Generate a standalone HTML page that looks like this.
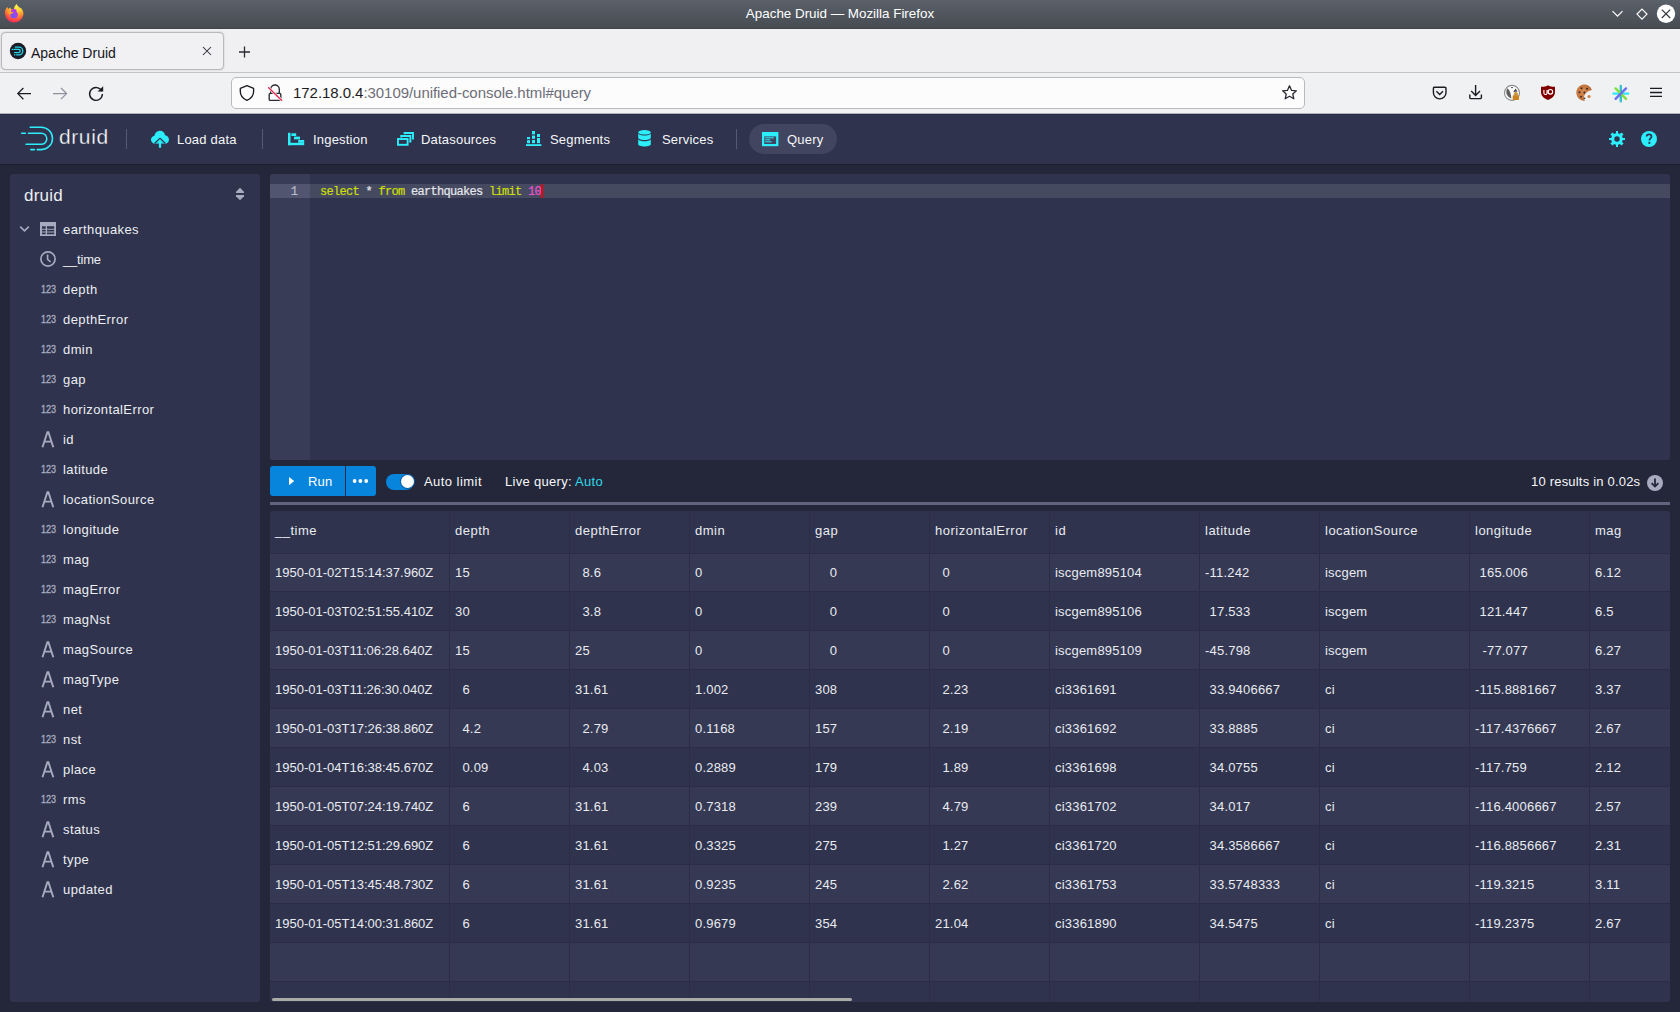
<!DOCTYPE html>
<html><head><meta charset="utf-8"><title>Apache Druid</title>
<style>
*{box-sizing:border-box;margin:0;padding:0}
html,body{width:1680px;height:1012px;overflow:hidden;font-family:"Liberation Sans",sans-serif;background:#24273a;position:relative}
.a{position:absolute}
.t{position:absolute;white-space:pre;line-height:20px}
svg{position:absolute;overflow:visible}
#title{left:0;top:0;width:1680px;height:29px;background:linear-gradient(#5b6169,#474c53);border-bottom:1px solid #3f434a}
#tabs{left:0;top:29px;width:1680px;height:44px;background:#f0f0f3;border-bottom:1px solid #c4c4c8}
#tab{left:1.5px;top:3.7px;width:221.5px;height:36.5px;background:#f1f1f4;border-radius:4px;box-shadow:0 0 1.5px 0.5px rgba(0,0,0,.28)}
#toolbar{left:0;top:73px;width:1680px;height:40px;background:#f0f1f3}
#url{left:231px;top:4px;width:1074px;height:32px;background:#fcfcfd;border:1px solid #b9b9be;border-radius:5px}
#nav{left:0;top:113px;width:1680px;height:51px;background:#2f334d;box-shadow:0 1px 1px rgba(0,0,0,.2)}
.nt{color:#f6f7f9;font-size:13px;letter-spacing:.2px;top:16.5px}
.sep{position:absolute;width:1px;height:20px;top:16px;background:#555a73}
#side{left:10px;top:174px;width:250px;height:828px;background:#2f334d;border-radius:3px}
.st{color:#eceef2;font-size:13px;letter-spacing:.4px;left:53px}
.ic{fill:#a7abc0}
#editor{left:270px;top:174px;width:1400px;height:286px;background:#2f334d;border-radius:3px;overflow:hidden}
#gutter{left:0;top:0;width:40px;height:286px;background:#383c56}
#hl{left:40px;top:10px;width:1360px;height:14px;background:#454a61}
#ghl{left:0;top:10px;width:40px;height:14px;background:#51556f}
.code{font-family:"Liberation Mono",monospace;font-size:12px;letter-spacing:-.7px;line-height:14px;top:11px;white-space:pre;-webkit-text-stroke:.2px currentColor}
.rt{color:#f6f7f9;font-size:13px;letter-spacing:.15px}
#bar{left:270px;top:502px;width:1400px;height:3px;background:#60647f}
#table{left:270px;top:511px;width:1400px;height:491px;background:#2f334d;border-radius:3px;overflow:hidden}
.row{position:absolute;left:0;width:1400px;height:39px;border-bottom:1px solid #2a2d43}
.row.odd{background:#353954}
.vl{position:absolute;top:0;width:1px;height:491px;background:#2a2d43}
.c{position:absolute;top:0;height:38px;line-height:38px;font-size:13px;color:#e9ebf0;white-space:pre;letter-spacing:.2px}
.h{position:absolute;top:0;height:40px;line-height:40px;font-size:13px;color:#e9ebf0;white-space:pre;letter-spacing:.5px}
</style></head><body>

<div id="title" class="a">
 <svg width="28" height="28" style="left:0;top:0" viewBox="0 0 28 28">
  <defs>
   <radialGradient id="ffg" cx="16.8" cy="4.5" r="21" gradientUnits="userSpaceOnUse">
    <stop offset="0" stop-color="#fff44f"/><stop offset="0.3" stop-color="#ffd53a"/><stop offset="0.5" stop-color="#ff9a2e"/><stop offset="0.75" stop-color="#ff4646"/><stop offset="1" stop-color="#e3127d"/>
   </radialGradient>
   <radialGradient id="ffp" cx="13" cy="16" r="5.5" gradientUnits="userSpaceOnUse">
    <stop offset="0" stop-color="#6a5ae8"/><stop offset="0.6" stop-color="#9c46f0"/><stop offset="1" stop-color="#b833e1"/>
   </radialGradient>
  </defs>
  <path d="M14 8.8 C14.3 6.6 15.4 5 16.6 3.9 C17.4 5.6 19 7.1 21.2 8.3 C22.7 10 23.5 12 23.5 14.2 A9.4 9.4 0 1 1 5.1 10.6 C5.6 9.2 6.4 8 7.4 7.1 L8.2 8.9 L10.3 7.6 L11 9.4 Z" fill="url(#ffg)"/>
  <path d="M11.6 9.6 C13.4 8.6 15.6 9 16.8 10.4 L16 11.2 C17.3 12 17.9 13.4 17.8 14.8 A3.8 3.8 0 1 1 10.2 14.6 Z" fill="url(#ffp)"/>
  <path d="M6.6 12.4 C8.6 11.6 11.2 11.4 13.8 12.4 C12.4 13 11.2 13.6 10.4 14.6 C9.6 13.6 8 12.8 6.6 12.4 Z" fill="#ffa62a"/>
 </svg>
 <div class="t" style="left:0;width:1680px;top:4px;text-align:center;color:#fff;font-size:13.4px">Apache Druid — Mozilla Firefox</div>
 <svg width="14" height="10" style="left:1611px;top:9px"><polyline points="1.5,2.2 6.5,7.2 11.5,2.2" fill="none" stroke="#fff" stroke-width="1.2"/></svg>
 <svg width="14" height="14" style="left:1635px;top:7px"><polygon points="7,2.1 12,7.1 7,12.1 2,7.1" fill="none" stroke="#fff" stroke-width="1.15"/></svg>
 <svg width="20" height="20" style="left:1656px;top:4px"><circle cx="10" cy="9.8" r="9.2" fill="#fff"/><path d="M5.8 5.6 L14.2 14 M14.2 5.6 L5.8 14" stroke="#2d3035" stroke-width="1.1"/></svg>
</div>
<div id="tabs" class="a">
 <div id="tab" class="a"></div>
 <svg width="18" height="18" style="left:9px;top:13px" viewBox="0 0 18 18">
  <circle cx="9" cy="9" r="8.2" fill="#1a1c27"/>
  <g fill="none" stroke="#2ad4e6" stroke-width="1.3" stroke-linecap="round">
   <path d="M6.3 5.2 H10 A3.8 3.8 0 0 1 10 12.8 H7.6"/>
   <path d="M5 7.4 H9.6 A1.6 1.6 0 0 1 9.6 10.6 H5.6"/>
   <path d="M3.2 7.4 H3.6 M5.4 12.8 H6"/>
  </g>
 </svg>
 <div class="t" style="left:31px;top:14px;font-size:14px;color:#15141a">Apache Druid</div>
 <svg width="12" height="12" style="left:201px;top:16px"><path d="M2 2 L10 10 M10 2 L2 10" stroke="#2b2a33" stroke-width="1.05"/></svg>
 <svg width="14" height="14" style="left:237px;top:16px"><path d="M7.5 1.5 V12.5 M2 7 H13" stroke="#2b2a33" stroke-width="1.3"/></svg>
</div>
<div id="toolbar" class="a">
 <svg width="18" height="16" style="left:16px;top:13px"><path d="M1.8 7.6 H15 M7.4 2 L1.8 7.6 L7.4 13.2" fill="none" stroke="#1c1b22" stroke-width="1.25"/></svg>
 <svg width="18" height="16" style="left:52px;top:13px"><path d="M1 7.6 H14.6 M9 2 L14.6 7.6 L9 13.2" fill="none" stroke="#8f8f9d" stroke-width="1.2"/></svg>
 <svg width="18" height="18" style="left:87px;top:12px"><path d="M14.8 6.2 A6.4 6.4 0 1 0 15.4 9" fill="none" stroke="#1c1b22" stroke-width="1.4"/><polygon points="10.6,6.6 16.2,6.6 16.2,1.2" fill="#1c1b22"/></svg>
 <div id="url" class="a">
  <svg width="18" height="18" style="left:7px;top:6px"><path d="M7.95 1.6 L14.6 4.4 V7.4 C14.6 11.6 11.8 14.6 7.95 16.3 C4.1 14.6 1.3 11.6 1.3 7.4 V4.4 Z" fill="none" stroke="#1c1b22" stroke-width="1.35" stroke-linejoin="round"/></svg>
  <svg width="18" height="18" style="left:35px;top:6px"><path d="M3.7 9.3 V5.3 A4.3 4.3 0 0 1 12.3 5.3 V9.3" fill="none" stroke="#2b2a33" stroke-width="1.35"/><rect x="2.2" y="9.4" width="11.6" height="7" rx="1" fill="none" stroke="#2b2a33" stroke-width="1.35"/><path d="M1.2 3.2 L15 16.8" stroke="#fcfcfd" stroke-width="2.6"/><path d="M1.2 3.2 L15 16.8" stroke="#e22850" stroke-width="1.35"/></svg>
  <div class="t" style="left:61px;top:5px;font-size:15px;color:#1c1b22;letter-spacing:-.05px">172.18.0.4<span style="color:#6e6e78">:30109/unified-console.html#query</span></div>
  <svg width="18" height="18" style="left:1049px;top:6px"><polygon points="8.5,1.8 10.6,6.4 15.4,6.8 11.8,10 12.8,14.8 8.5,12.3 4.2,14.8 5.2,10 1.6,6.8 6.4,6.4" fill="none" stroke="#2b2a33" stroke-width="1.3" stroke-linejoin="round"/></svg>
 </div>
 <svg width="18" height="18" style="left:1431px;top:12px"><path d="M2.4 2.2 H13.8 A1.2 1.2 0 0 1 15 3.4 V7.6 A6.3 6.3 0 0 1 2.4 7.6 V3.4 A1.2 1.2 0 0 1 3.6 2.2 Z" fill="none" stroke="#1c1b22" stroke-width="1.4"/><polyline points="5.4,6.2 8.7,9.4 12,6.2" fill="none" stroke="#1c1b22" stroke-width="1.4"/></svg>
 <svg width="18" height="18" style="left:1467px;top:11px"><path d="M8.6 1 V11.2 M4.2 7 L8.6 11.4 L13 7" fill="none" stroke="#1c1b22" stroke-width="1.4"/><path d="M2.8 10.6 V13.4 A1.2 1.2 0 0 0 4 14.6 H13.2 A1.2 1.2 0 0 0 14.4 13.4 V10.6" fill="none" stroke="#1c1b22" stroke-width="1.4"/></svg>
 <svg width="18" height="18" style="left:1503px;top:11px"><circle cx="9" cy="8.9" r="7.5" fill="#fbfbfb" stroke="#8c8c8c" stroke-width="1.1"/><path d="M4.4 4.3 C2.6 7 2.4 12 8.4 14.5 C8 11 7.6 7 4.4 4.3Z" fill="#5f5f5f"/><ellipse cx="9" cy="3.6" rx="1.1" ry=".7" fill="#444"/><path d="M12.5 4.4 L10.2 8.2 L14.6 7.4Z" fill="#4d5058"/><path d="M10.8 11.6 V10.2 A2.1 2.1 0 0 1 15 10.2 V11.6Z" fill="#dc9a2c"/><rect x="9.7" y="11.2" width="6.3" height="4.8" rx=".7" fill="#c9841c"/><circle cx="12.9" cy="10.2" r=".7" fill="#7f8ba0"/></svg>
 <svg width="18" height="18" style="left:1540px;top:11px"><path d="M8 1.2 C9.6 2.4 11.8 2.6 15 2.8 V8 C15 11.6 12.4 14.2 8 16 C3.6 14.2 1 11.6 1 8 V2.8 C4.2 2.6 6.4 2.4 8 1.2Z" fill="#800000"/><path d="M3.9 6 V9 A1.5 1.5 0 0 0 7 9 V6" fill="none" stroke="#fff" stroke-width="1.1"/><circle cx="10.4" cy="7.8" r="2.3" fill="none" stroke="#fff" stroke-width="1.1"/><path d="M8.2 6 V9.6" stroke="#fff" stroke-width="1.1"/></svg>
 <svg width="18" height="18" style="left:1575px;top:11px"><defs><radialGradient id="ck" cx="8" cy="8" r="9" gradientUnits="userSpaceOnUse"><stop offset="0" stop-color="#d48a50"/><stop offset=".75" stop-color="#c6763c"/><stop offset="1" stop-color="#a65c2a"/></radialGradient></defs><path d="M16.85 6 A8 8 0 1 0 9.9 16.6 C9.2 15 8.8 13.5 9.1 12.5 C9.6 10.8 10.4 9.4 13 7.6 C14.5 6.8 15.8 6.2 16.85 6Z" fill="url(#ck)"/><circle cx="14" cy="12.5" r="1.6" fill="#d0844a"/><g fill="#3e2a2e"><circle cx="6.6" cy="4.2" r="1.05"/><circle cx="12" cy="4.7" r="1.05"/><circle cx="4.5" cy="8.3" r="1.05"/><circle cx="9.4" cy="8.6" r="1.05"/><circle cx="6.05" cy="12.7" r="1"/><circle cx="9.5" cy="14.25" r=".8"/></g><circle cx="9" cy="5.6" r=".6" fill="#e8a860"/></svg>
 <svg width="18" height="18" style="left:1611.5px;top:11.5px" stroke-linecap="round" stroke-width="2.4"><path d="M8.8 1 V16.2" stroke="#36c1cf"/><path d="M1.4 8.6 H16.2" stroke="#31e8f7"/><path d="M3.6 3.4 L14 13.8" stroke="#7fe03a"/><path d="M14 3.4 L3.6 13.8" stroke="#6a6ff0"/></svg>
 <svg width="16" height="14" style="left:1648px;top:13px"><path d="M2 2.4 H14 M2 6.5 H14 M2 10.4 H14" stroke="#1c1b22" stroke-width="1.4"/></svg>
</div>


<div id="nav" class="a">
 <div class="a" style="left:0;top:0;width:1680px;height:1px;background:#b4b5bc"></div><div class="a" style="left:0;top:1px;width:1680px;height:1px;background:#262a45"></div>
 <svg width="34" height="26" style="left:20px;top:13px" viewBox="0 0 34 26" fill="none" stroke="#2ceefb" stroke-width="1.55" stroke-linecap="round">
  <path d="M10.2 1.2 H21.3 A11.2 11.2 0 0 1 21.3 23.6 H17.2"/>
  <path d="M8.4 7.2 H21.25 A5.55 5.55 0 0 1 21.25 18.3 H6"/>
  <path d="M1.6 7.2 H5.4"/>
  <path d="M10.8 23.6 H14.4"/>
 </svg>
 <div class="t" style="left:59px;top:11px;font-size:21px;line-height:26px;color:#ffffff;letter-spacing:.6px;-webkit-text-stroke:.3px #2f334d">druid</div>
 <div class="sep" style="left:126px"></div>
 <svg width="18" height="18" style="left:151px;top:17px" viewBox="0 0 16 16"><path d="M8 0.6 C10.4 0.6 12.2 2.4 12.5 4.6 C14.6 4.9 16 6.6 16 8.6 C16 10.6 14.4 12.2 12.4 12.2 H11.4 L8 8.8 L4.6 12.2 H3.6 C1.6 12.2 0 10.6 0 8.6 C0 6.8 1.3 5.3 3.1 5 C3.4 2.5 5.5 0.6 8 0.6 Z" fill="#2ceefb"/><path d="M8 8.6 L11.4 12 H9 V15.8 H7 V12 H4.6 Z" fill="#2ceefb"/><path d="M8 7.2 L3.2 12 M8 7.2 L12.8 12" stroke="#2f334d" stroke-width="1.1"/></svg>
 <div class="t nt" style="left:177px">Load data</div>
 <div class="sep" style="left:262px"></div>
 <svg width="17" height="13" style="left:288px;top:20px" viewBox="0 0 17 13" fill="#2ceefb"><rect x="0" y="-0.2" width="2.5" height="12.4"/><rect x="0" y="9.8" width="16.2" height="2.4"/><rect x="3.4" y="0.3" width="4.8" height="2.7"/><rect x="6" y="3.6" width="6" height="2.8"/><rect x="10.2" y="7" width="6" height="2.8"/></svg>
 <div class="t nt" style="left:313px">Ingestion</div>
 <svg width="17" height="14" style="left:397px;top:19px" viewBox="0 0 17 14" fill="none" stroke="#2ceefb" stroke-width="1.9"><rect x="1" y="7" width="9.6" height="5.8"/><path d="M4.2 5.4 V4 H13.4 V9.6 H12.2"/><path d="M7.6 2.2 V0.95 H16 V6.6 H15"/></svg>
 <div class="t nt" style="left:421px">Datasources</div>
 <svg width="16" height="15" style="left:526px;top:18px" viewBox="0 0 16 15" fill="#2ceefb"><rect x="1" y="6" width="3" height="2.2"/><rect x="1" y="9.2" width="3" height="3"/><rect x="6" y="0" width="3" height="3.4"/><rect x="6" y="4.6" width="3" height="3.2"/><rect x="6" y="9" width="3" height="3.2"/><rect x="11" y="3" width="3" height="3"/><rect x="11" y="7" width="3" height="5.2"/><rect x="0" y="13.2" width="15.4" height="1.8"/></svg>
 <div class="t nt" style="left:550px">Segments</div>
 <svg width="14" height="17" style="left:638px;top:17px" viewBox="0 0 14 17" fill="#2ceefb"><ellipse cx="6.5" cy="2.3" rx="6.3" ry="2.3"/><path d="M0.2 3.4 C1 5 4 5.4 6.5 5.4 C9 5.4 12 5 12.8 3.4 V8 C12 9.6 9 10 6.5 10 C4 10 1 9.6 0.2 8 Z"/><path d="M0.2 9.2 C1 10.8 4 11.2 6.5 11.2 C9 11.2 12 10.8 12.8 9.2 V14.2 C12.8 15.6 10 16.4 6.5 16.4 C3 16.4 0.2 15.6 0.2 14.2 Z"/></svg>
 <div class="t nt" style="left:662px">Services</div>
 <div class="sep" style="left:736px"></div>
 <div class="a" style="left:749px;top:11px;width:88px;height:30px;border-radius:15px;background:#414560"></div>
 <svg width="17" height="15" style="left:762px;top:19px" viewBox="0 0 17 15"><rect x="0" y="0" width="16.4" height="14.2" fill="#2ceefb"/><rect x="2.3" y="4.4" width="11.8" height="7.6" fill="#414560"/><rect x="3.2" y="5.3" width="8.6" height="1" fill="#2ceefb"/><rect x="3.2" y="7.3" width="5" height="1" fill="#2ceefb"/><rect x="3.2" y="9.3" width="6.4" height="1" fill="#2ceefb"/></svg>
 <div class="t nt" style="left:787px">Query</div>
 <svg width="16" height="16" style="left:1609px;top:18px" viewBox="0 0 16 16"><path fill="#2ceefb" fill-rule="evenodd" d="M7 0 H9 V2.2 A6 6 0 0 1 10.9 3 L12.5 1.4 L14.6 3.5 L13 5.1 A6 6 0 0 1 13.8 7 H16 V9 H13.8 A6 6 0 0 1 13 10.9 L14.6 12.5 L12.5 14.6 L10.9 13 A6 6 0 0 1 9 13.8 V16 H7 V13.8 A6 6 0 0 1 5.1 13 L3.5 14.6 L1.4 12.5 L3 10.9 A6 6 0 0 1 2.2 9 H0 V7 H2.2 A6 6 0 0 1 3 5.1 L1.4 3.5 L3.5 1.4 L5.1 3 A6 6 0 0 1 7 2.2 Z M8 5.3 A2.7 2.7 0 1 0 8 10.7 A2.7 2.7 0 1 0 8 5.3 Z"/></svg>
 <svg width="16" height="16" style="left:1641px;top:18px" viewBox="0 0 16 16"><circle cx="8" cy="8" r="8" fill="#2ceefb"/><path d="M5.6 5.6 C5.6 4.2 6.6 3.4 8 3.4 C9.5 3.4 10.5 4.3 10.5 5.5 C10.5 7.4 8.4 7.5 8.4 9.4" fill="none" stroke="#2f334d" stroke-width="1.7"/><rect x="7.4" y="10.9" width="1.9" height="1.9" fill="#2f334d"/></svg>
</div>

<div id="side" class="a">
<div class="t" style="left:14px;top:10px;font-size:17px;line-height:24px;color:#eceef2;letter-spacing:.2px">druid</div>
<svg width="10" height="14" style="left:225px;top:13px" viewBox="0 0 10 14" class="ic"><path d="M5 0.8 L9 4.8 V6 H1 V4.8 Z" fill="#a7abc0"/><path d="M5 13.2 L9 9.2 V8 H1 V9.2 Z" fill="#a7abc0"/></svg>
<svg width="12" height="8" style="left:9px;top:51px"><polyline points="1.2,1.6 5.5,5.9 9.8,1.6" fill="none" stroke="#a7abc0" stroke-width="1.6"/></svg>
<svg width="16" height="14" style="left:30px;top:48px" viewBox="0 0 16 14"><path fill="#a7abc0" fill-rule="evenodd" d="M0 0 H16 V14 H0 Z M2 4.3 V6.7 H5.7 V4.3 Z M7 4.3 V6.7 H14.2 V4.3 Z M2 7.7 V9.5 H5.7 V7.7 Z M7 7.7 V9.5 H14.2 V7.7 Z M2 10.4 V12.2 H5.7 V10.4 Z M7 10.4 V12.2 H14.2 V10.4 Z"/></svg>
<div class="t st" style="top:46px">earthquakes</div>
<svg width="16" height="16" style="left:30px;top:77px" viewBox="0 0 16 16"><circle cx="8" cy="8" r="7.1" fill="none" stroke="#a7abc0" stroke-width="1.7"/><path d="M7.6 3.6 V8.4 L10.6 11" fill="none" stroke="#a7abc0" stroke-width="1.6"/></svg>
<div class="t st" style="top:76px;letter-spacing:-.2px">__time</div>
<svg width="16" height="10" style="left:31px;top:110px"><text x="0" y="9" font-family="Liberation Sans" font-size="11" fill="#a7abc0" stroke="#a7abc0" stroke-width="0.35" textLength="15" lengthAdjust="spacingAndGlyphs">123</text></svg>
<div class="t st" style="top:106px">depth</div>
<svg width="16" height="10" style="left:31px;top:140px"><text x="0" y="9" font-family="Liberation Sans" font-size="11" fill="#a7abc0" stroke="#a7abc0" stroke-width="0.35" textLength="15" lengthAdjust="spacingAndGlyphs">123</text></svg>
<div class="t st" style="top:136px">depthError</div>
<svg width="16" height="10" style="left:31px;top:170px"><text x="0" y="9" font-family="Liberation Sans" font-size="11" fill="#a7abc0" stroke="#a7abc0" stroke-width="0.35" textLength="15" lengthAdjust="spacingAndGlyphs">123</text></svg>
<div class="t st" style="top:166px">dmin</div>
<svg width="16" height="10" style="left:31px;top:200px"><text x="0" y="9" font-family="Liberation Sans" font-size="11" fill="#a7abc0" stroke="#a7abc0" stroke-width="0.35" textLength="15" lengthAdjust="spacingAndGlyphs">123</text></svg>
<div class="t st" style="top:196px">gap</div>
<svg width="16" height="10" style="left:31px;top:230px"><text x="0" y="9" font-family="Liberation Sans" font-size="11" fill="#a7abc0" stroke="#a7abc0" stroke-width="0.35" textLength="15" lengthAdjust="spacingAndGlyphs">123</text></svg>
<div class="t st" style="top:226px">horizontalError</div>
<svg width="14" height="17" style="left:31px;top:257px" viewBox="0 0 14 17"><path d="M1.5 16.2 L6.4 1.2 H7.4 L12.3 16.2 M3.6 10.6 H10.2" fill="none" stroke="#a7abc0" stroke-width="1.9"/></svg>
<div class="t st" style="top:256px">id</div>
<svg width="16" height="10" style="left:31px;top:290px"><text x="0" y="9" font-family="Liberation Sans" font-size="11" fill="#a7abc0" stroke="#a7abc0" stroke-width="0.35" textLength="15" lengthAdjust="spacingAndGlyphs">123</text></svg>
<div class="t st" style="top:286px">latitude</div>
<svg width="14" height="17" style="left:31px;top:317px" viewBox="0 0 14 17"><path d="M1.5 16.2 L6.4 1.2 H7.4 L12.3 16.2 M3.6 10.6 H10.2" fill="none" stroke="#a7abc0" stroke-width="1.9"/></svg>
<div class="t st" style="top:316px">locationSource</div>
<svg width="16" height="10" style="left:31px;top:350px"><text x="0" y="9" font-family="Liberation Sans" font-size="11" fill="#a7abc0" stroke="#a7abc0" stroke-width="0.35" textLength="15" lengthAdjust="spacingAndGlyphs">123</text></svg>
<div class="t st" style="top:346px">longitude</div>
<svg width="16" height="10" style="left:31px;top:380px"><text x="0" y="9" font-family="Liberation Sans" font-size="11" fill="#a7abc0" stroke="#a7abc0" stroke-width="0.35" textLength="15" lengthAdjust="spacingAndGlyphs">123</text></svg>
<div class="t st" style="top:376px">mag</div>
<svg width="16" height="10" style="left:31px;top:410px"><text x="0" y="9" font-family="Liberation Sans" font-size="11" fill="#a7abc0" stroke="#a7abc0" stroke-width="0.35" textLength="15" lengthAdjust="spacingAndGlyphs">123</text></svg>
<div class="t st" style="top:406px">magError</div>
<svg width="16" height="10" style="left:31px;top:440px"><text x="0" y="9" font-family="Liberation Sans" font-size="11" fill="#a7abc0" stroke="#a7abc0" stroke-width="0.35" textLength="15" lengthAdjust="spacingAndGlyphs">123</text></svg>
<div class="t st" style="top:436px">magNst</div>
<svg width="14" height="17" style="left:31px;top:467px" viewBox="0 0 14 17"><path d="M1.5 16.2 L6.4 1.2 H7.4 L12.3 16.2 M3.6 10.6 H10.2" fill="none" stroke="#a7abc0" stroke-width="1.9"/></svg>
<div class="t st" style="top:466px">magSource</div>
<svg width="14" height="17" style="left:31px;top:497px" viewBox="0 0 14 17"><path d="M1.5 16.2 L6.4 1.2 H7.4 L12.3 16.2 M3.6 10.6 H10.2" fill="none" stroke="#a7abc0" stroke-width="1.9"/></svg>
<div class="t st" style="top:496px">magType</div>
<svg width="14" height="17" style="left:31px;top:527px" viewBox="0 0 14 17"><path d="M1.5 16.2 L6.4 1.2 H7.4 L12.3 16.2 M3.6 10.6 H10.2" fill="none" stroke="#a7abc0" stroke-width="1.9"/></svg>
<div class="t st" style="top:526px">net</div>
<svg width="16" height="10" style="left:31px;top:560px"><text x="0" y="9" font-family="Liberation Sans" font-size="11" fill="#a7abc0" stroke="#a7abc0" stroke-width="0.35" textLength="15" lengthAdjust="spacingAndGlyphs">123</text></svg>
<div class="t st" style="top:556px">nst</div>
<svg width="14" height="17" style="left:31px;top:587px" viewBox="0 0 14 17"><path d="M1.5 16.2 L6.4 1.2 H7.4 L12.3 16.2 M3.6 10.6 H10.2" fill="none" stroke="#a7abc0" stroke-width="1.9"/></svg>
<div class="t st" style="top:586px">place</div>
<svg width="16" height="10" style="left:31px;top:620px"><text x="0" y="9" font-family="Liberation Sans" font-size="11" fill="#a7abc0" stroke="#a7abc0" stroke-width="0.35" textLength="15" lengthAdjust="spacingAndGlyphs">123</text></svg>
<div class="t st" style="top:616px">rms</div>
<svg width="14" height="17" style="left:31px;top:647px" viewBox="0 0 14 17"><path d="M1.5 16.2 L6.4 1.2 H7.4 L12.3 16.2 M3.6 10.6 H10.2" fill="none" stroke="#a7abc0" stroke-width="1.9"/></svg>
<div class="t st" style="top:646px">status</div>
<svg width="14" height="17" style="left:31px;top:677px" viewBox="0 0 14 17"><path d="M1.5 16.2 L6.4 1.2 H7.4 L12.3 16.2 M3.6 10.6 H10.2" fill="none" stroke="#a7abc0" stroke-width="1.9"/></svg>
<div class="t st" style="top:676px">type</div>
<svg width="14" height="17" style="left:31px;top:707px" viewBox="0 0 14 17"><path d="M1.5 16.2 L6.4 1.2 H7.4 L12.3 16.2 M3.6 10.6 H10.2" fill="none" stroke="#a7abc0" stroke-width="1.9"/></svg>
<div class="t st" style="top:706px">updated</div>
</div>

<div id="editor" class="a">
 <div id="gutter" class="a"></div><div id="ghl" class="a"></div><div id="hl" class="a"></div>
 <div class="a code" style="left:0;width:28px;text-align:right;color:#b9bbcb;letter-spacing:0">1</div>
 <div class="a code" style="left:50px;color:#e6e7ec"><span style="color:#cddf08">select</span> * <span style="color:#cddf08">from</span> earthquakes <span style="color:#cddf08">limit</span> <span style="color:#ee52cc">10</span></div>
 <div class="a" style="left:271px;top:10px;width:2px;height:14px;background:#e8000b"></div>
</div>


<div class="a" style="left:270px;top:466px;width:106px;height:30px;border-radius:3px;background:#0784dc"></div>
<div class="a" style="left:345px;top:466px;width:1px;height:30px;background:#1f2a44"></div>
<svg width="8" height="10" style="left:288px;top:476px"><polygon points="1,1 6.2,5.1 1,9.2" fill="#fff"/></svg>
<div class="t rt" style="left:308px;top:472px;color:#fff">Run</div>
<svg width="20" height="6" style="left:352px;top:478px"><circle cx="2.6" cy="3" r="1.9" fill="#fff"/><circle cx="8.4" cy="3" r="1.9" fill="#fff"/><circle cx="14.2" cy="3" r="1.9" fill="#fff"/></svg>
<div class="a" style="left:386px;top:474px;width:28px;height:16px;border-radius:8px;background:#0784dc"></div>
<div class="a" style="left:400.5px;top:475px;width:13px;height:13px;border-radius:50%;background:#fff;box-shadow:0 0 0 1px #0a5fa8"></div>
<div class="t rt" style="left:424px;top:472px;letter-spacing:.45px">Auto limit</div>
<div class="t rt" style="left:505px;top:472px;letter-spacing:.3px">Live query: <span style="color:#2fd7e8">Auto</span></div>
<div class="t rt" style="left:1531px;top:472px;letter-spacing:.2px">10 results in 0.02s</div>
<svg width="16" height="16" style="left:1647px;top:474.5px" viewBox="0 0 16 16"><circle cx="8" cy="8" r="8" fill="#a7abc0"/><path d="M8 3.4 V11.6 M4.6 8.2 L8 11.6 L11.4 8.2" fill="none" stroke="#24273a" stroke-width="1.8"/></svg>
<div id="bar" class="a"></div>

<div id="table" class="a">
<div class="row" style="top:0;height:43px"></div>
<div class="row odd" style="top:43px;height:38px"></div>
<div class="row" style="top:81px;height:39px"></div>
<div class="row odd" style="top:120px;height:39px"></div>
<div class="row" style="top:159px;height:39px"></div>
<div class="row odd" style="top:198px;height:39px"></div>
<div class="row" style="top:237px;height:39px"></div>
<div class="row odd" style="top:276px;height:39px"></div>
<div class="row" style="top:315px;height:39px"></div>
<div class="row odd" style="top:354px;height:39px"></div>
<div class="row" style="top:393px;height:39px"></div>
<div class="row odd" style="top:432px;height:39px"></div>
<div class="row" style="top:471px;height:39px"></div>
<div class="vl" style="left:179px"></div>
<div class="vl" style="left:299px"></div>
<div class="vl" style="left:419px"></div>
<div class="vl" style="left:539px"></div>
<div class="vl" style="left:659px"></div>
<div class="vl" style="left:779px"></div>
<div class="vl" style="left:929px"></div>
<div class="vl" style="left:1049px"></div>
<div class="vl" style="left:1199px"></div>
<div class="vl" style="left:1319px"></div>
<div class="h" style="left:5px;top:0">__time</div>
<div class="h" style="left:185px;top:0">depth</div>
<div class="h" style="left:305px;top:0">depthError</div>
<div class="h" style="left:425px;top:0">dmin</div>
<div class="h" style="left:545px;top:0">gap</div>
<div class="h" style="left:665px;top:0">horizontalError</div>
<div class="h" style="left:785px;top:0">id</div>
<div class="h" style="left:935px;top:0">latitude</div>
<div class="h" style="left:1055px;top:0">locationSource</div>
<div class="h" style="left:1205px;top:0">longitude</div>
<div class="h" style="left:1325px;top:0">mag</div>
<div class="c" style="left:5.00px;top:43px;letter-spacing:0">1950-01-02T15:14:37.960Z</div>
<div class="c" style="left:185.00px;top:43px">15</div>
<div class="c" style="left:312.43px;top:43px">8.6</div>
<div class="c" style="left:425.00px;top:43px">0</div>
<div class="c" style="left:559.86px;top:43px">0</div>
<div class="c" style="left:672.43px;top:43px">0</div>
<div class="c" style="left:785.00px;top:43px">iscgem895104</div>
<div class="c" style="left:935.00px;top:43px">-11.242</div>
<div class="c" style="left:1055.00px;top:43px">iscgem</div>
<div class="c" style="left:1209.53px;top:43px">165.006</div>
<div class="c" style="left:1325.00px;top:43px">6.12</div>
<div class="c" style="left:5.00px;top:82px;letter-spacing:0">1950-01-03T02:51:55.410Z</div>
<div class="c" style="left:185.00px;top:82px">30</div>
<div class="c" style="left:312.43px;top:82px">3.8</div>
<div class="c" style="left:425.00px;top:82px">0</div>
<div class="c" style="left:559.86px;top:82px">0</div>
<div class="c" style="left:672.43px;top:82px">0</div>
<div class="c" style="left:785.00px;top:82px">iscgem895106</div>
<div class="c" style="left:939.53px;top:82px">17.533</div>
<div class="c" style="left:1055.00px;top:82px">iscgem</div>
<div class="c" style="left:1209.53px;top:82px">121.447</div>
<div class="c" style="left:1325.00px;top:82px">6.5</div>
<div class="c" style="left:5.00px;top:121px;letter-spacing:0">1950-01-03T11:06:28.640Z</div>
<div class="c" style="left:185.00px;top:121px">15</div>
<div class="c" style="left:305.00px;top:121px">25</div>
<div class="c" style="left:425.00px;top:121px">0</div>
<div class="c" style="left:559.86px;top:121px">0</div>
<div class="c" style="left:672.43px;top:121px">0</div>
<div class="c" style="left:785.00px;top:121px">iscgem895109</div>
<div class="c" style="left:935.00px;top:121px">-45.798</div>
<div class="c" style="left:1055.00px;top:121px">iscgem</div>
<div class="c" style="left:1212.43px;top:121px">-77.077</div>
<div class="c" style="left:1325.00px;top:121px">6.27</div>
<div class="c" style="left:5.00px;top:160px;letter-spacing:0">1950-01-03T11:26:30.040Z</div>
<div class="c" style="left:192.43px;top:160px">6</div>
<div class="c" style="left:305.00px;top:160px">31.61</div>
<div class="c" style="left:425.00px;top:160px">1.002</div>
<div class="c" style="left:545.00px;top:160px">308</div>
<div class="c" style="left:672.43px;top:160px">2.23</div>
<div class="c" style="left:785.00px;top:160px">ci3361691</div>
<div class="c" style="left:939.53px;top:160px">33.9406667</div>
<div class="c" style="left:1055.00px;top:160px">ci</div>
<div class="c" style="left:1205.00px;top:160px">-115.8881667</div>
<div class="c" style="left:1325.00px;top:160px">3.37</div>
<div class="c" style="left:5.00px;top:199px;letter-spacing:0">1950-01-03T17:26:38.860Z</div>
<div class="c" style="left:192.43px;top:199px">4.2</div>
<div class="c" style="left:312.43px;top:199px">2.79</div>
<div class="c" style="left:425.00px;top:199px">0.1168</div>
<div class="c" style="left:545.00px;top:199px">157</div>
<div class="c" style="left:672.43px;top:199px">2.19</div>
<div class="c" style="left:785.00px;top:199px">ci3361692</div>
<div class="c" style="left:939.53px;top:199px">33.8885</div>
<div class="c" style="left:1055.00px;top:199px">ci</div>
<div class="c" style="left:1205.00px;top:199px">-117.4376667</div>
<div class="c" style="left:1325.00px;top:199px">2.67</div>
<div class="c" style="left:5.00px;top:238px;letter-spacing:0">1950-01-04T16:38:45.670Z</div>
<div class="c" style="left:192.43px;top:238px">0.09</div>
<div class="c" style="left:312.43px;top:238px">4.03</div>
<div class="c" style="left:425.00px;top:238px">0.2889</div>
<div class="c" style="left:545.00px;top:238px">179</div>
<div class="c" style="left:672.43px;top:238px">1.89</div>
<div class="c" style="left:785.00px;top:238px">ci3361698</div>
<div class="c" style="left:939.53px;top:238px">34.0755</div>
<div class="c" style="left:1055.00px;top:238px">ci</div>
<div class="c" style="left:1205.00px;top:238px">-117.759</div>
<div class="c" style="left:1325.00px;top:238px">2.12</div>
<div class="c" style="left:5.00px;top:277px;letter-spacing:0">1950-01-05T07:24:19.740Z</div>
<div class="c" style="left:192.43px;top:277px">6</div>
<div class="c" style="left:305.00px;top:277px">31.61</div>
<div class="c" style="left:425.00px;top:277px">0.7318</div>
<div class="c" style="left:545.00px;top:277px">239</div>
<div class="c" style="left:672.43px;top:277px">4.79</div>
<div class="c" style="left:785.00px;top:277px">ci3361702</div>
<div class="c" style="left:939.53px;top:277px">34.017</div>
<div class="c" style="left:1055.00px;top:277px">ci</div>
<div class="c" style="left:1205.00px;top:277px">-116.4006667</div>
<div class="c" style="left:1325.00px;top:277px">2.57</div>
<div class="c" style="left:5.00px;top:316px;letter-spacing:0">1950-01-05T12:51:29.690Z</div>
<div class="c" style="left:192.43px;top:316px">6</div>
<div class="c" style="left:305.00px;top:316px">31.61</div>
<div class="c" style="left:425.00px;top:316px">0.3325</div>
<div class="c" style="left:545.00px;top:316px">275</div>
<div class="c" style="left:672.43px;top:316px">1.27</div>
<div class="c" style="left:785.00px;top:316px">ci3361720</div>
<div class="c" style="left:939.53px;top:316px">34.3586667</div>
<div class="c" style="left:1055.00px;top:316px">ci</div>
<div class="c" style="left:1205.00px;top:316px">-116.8856667</div>
<div class="c" style="left:1325.00px;top:316px">2.31</div>
<div class="c" style="left:5.00px;top:355px;letter-spacing:0">1950-01-05T13:45:48.730Z</div>
<div class="c" style="left:192.43px;top:355px">6</div>
<div class="c" style="left:305.00px;top:355px">31.61</div>
<div class="c" style="left:425.00px;top:355px">0.9235</div>
<div class="c" style="left:545.00px;top:355px">245</div>
<div class="c" style="left:672.43px;top:355px">2.62</div>
<div class="c" style="left:785.00px;top:355px">ci3361753</div>
<div class="c" style="left:939.53px;top:355px">33.5748333</div>
<div class="c" style="left:1055.00px;top:355px">ci</div>
<div class="c" style="left:1205.00px;top:355px">-119.3215</div>
<div class="c" style="left:1325.00px;top:355px">3.11</div>
<div class="c" style="left:5.00px;top:394px;letter-spacing:0">1950-01-05T14:00:31.860Z</div>
<div class="c" style="left:192.43px;top:394px">6</div>
<div class="c" style="left:305.00px;top:394px">31.61</div>
<div class="c" style="left:425.00px;top:394px">0.9679</div>
<div class="c" style="left:545.00px;top:394px">354</div>
<div class="c" style="left:665.00px;top:394px">21.04</div>
<div class="c" style="left:785.00px;top:394px">ci3361890</div>
<div class="c" style="left:939.53px;top:394px">34.5475</div>
<div class="c" style="left:1055.00px;top:394px">ci</div>
<div class="c" style="left:1205.00px;top:394px">-119.2375</div>
<div class="c" style="left:1325.00px;top:394px">2.67</div>
<div class="a" style="left:2px;top:487px;width:580px;height:3.2px;border-radius:1.6px;background:#aaaaa7"></div>
</div>
</body></html>
